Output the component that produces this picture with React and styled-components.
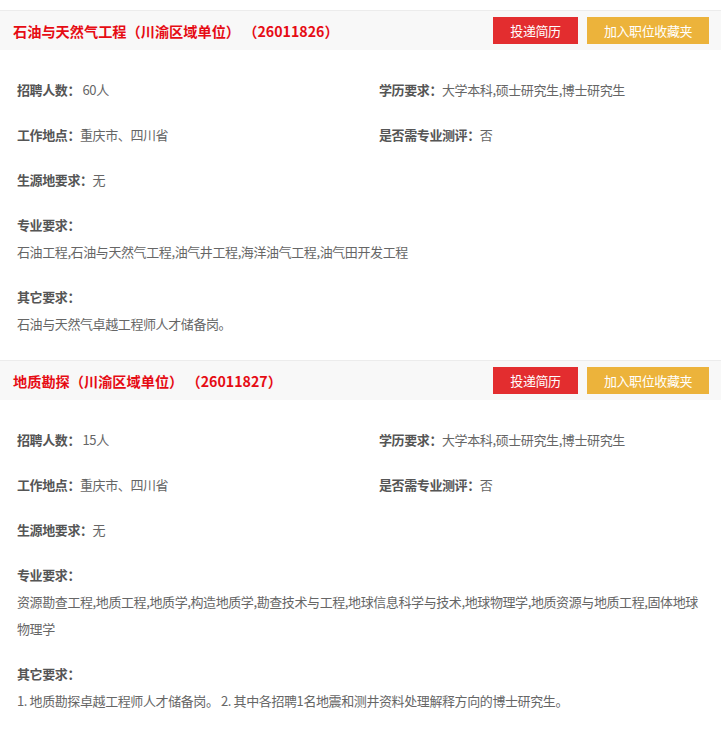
import React from "react";
import styled, { createGlobalStyle } from "styled-components";

const jobs = [
  {
    id: "26011826",
    name: "石油与天然气工程（川渝区域单位）",
    count: " 60人",
    degree: "大学本科,硕士研究生,博士研究生",
    place: "重庆市、四川省",
    test: "否",
    origin: "无",
    major: "石油工程,石油与天然气工程,油气井工程,海洋油气工程,油气田开发工程",
    other: "石油与天然气卓越工程师人才储备岗。",
  },
  {
    id: "26011827",
    name: "地质勘探（川渝区域单位）",
    count: " 15人",
    degree: "大学本科,硕士研究生,博士研究生",
    place: "重庆市、四川省",
    test: "否",
    origin: "无",
    major:
      "资源勘查工程,地质工程,地质学,构造地质学,勘查技术与工程,地球信息科学与技术,地球物理学,地质资源与地质工程,固体地球物理学",
    other: "1. 地质勘探卓越工程师人才储备岗。 2. 其中各招聘1名地震和测井资料处理解释方向的博士研究生。",
  },
];

const Job = ({ job }) => {
  return (
    <Section>
      <Header>
        <Title>
          {job.name} （{job.id}）
        </Title>
        <Actions>
          <Button $color="#e32d2f" $width="85px">
            投递简历
          </Button>
          <Button $color="#ecb33b" $width="122px">
            加入职位收藏夹
          </Button>
        </Actions>
      </Header>
      <Body>
        <InfoGrid>
          <Field>
            <Label>招聘人数：</Label>
            {job.count}
          </Field>
          <Field>
            <Label>学历要求：</Label>
            {job.degree}
          </Field>
          <Field>
            <Label>工作地点：</Label>
            {job.place}
          </Field>
          <Field>
            <Label>是否需专业测评：</Label>
            {job.test}
          </Field>
          <Field>
            <Label>生源地要求：</Label>
            {job.origin}
          </Field>
        </InfoGrid>
        <Block>
          <Label>专业要求：</Label>
          <Content>{job.major}</Content>
        </Block>
        <Block>
          <Label>其它要求：</Label>
          <Content>{job.other}</Content>
        </Block>
      </Body>
    </Section>
  );
};

export default function App() {
  return (
    <>
      <GlobalStyle />
      <Page>
        {jobs.map((job) => (
          <Job key={job.id} job={job} />
        ))}
      </Page>
    </>
  );
}

const GlobalStyle = createGlobalStyle`
  body {
    margin: 0;
    background: #fff;
    font-family: "Noto Sans CJK SC", "Noto Sans", sans-serif;
  }
`;

const Page = styled.div`
  padding-top: 10px;
  width: 721px;
`;

const Section = styled.section`
  display: flex;
  flex-direction: column;
`;

const Header = styled.div`
  display: flex;
  align-items: center;
  justify-content: space-between;
  height: 39px;
  border-top: 1px solid #ececec;
  background-color: #f8f8f8;
  padding: 0 12px 0 13px;
`;

const Title = styled.h3`
  margin: 0;
  color: #e60c14;
  font-size: 14.2px;
  font-weight: bold;
  white-space: pre;
`;

const Actions = styled.div`
  display: flex;
  gap: 9px;
`;

const Button = styled.button`
  width: ${(p) => p.$width};
  height: 27px;
  border: none;
  padding: 0;
  background-color: ${(p) => p.$color};
  color: #fff;
  font-family: inherit;
  font-size: 13px;
  letter-spacing: -0.4px;
  cursor: pointer;
`;

const Body = styled.div`
  display: flex;
  flex-direction: column;
  gap: 18px;
  padding: 26px 17px 23px;
  font-size: 13px;
  letter-spacing: -0.4px;
  line-height: 27px;
  color: #666;
`;

const InfoGrid = styled.div`
  display: grid;
  grid-template-columns: 362px 1fr;
  row-gap: 18px;
`;

const Field = styled.div`
  white-space: pre;
`;

const Label = styled.span`
  color: #555;
  font-weight: bold;
`;

const Block = styled.div`
  display: flex;
  flex-direction: column;
`;

const Content = styled.div``;
